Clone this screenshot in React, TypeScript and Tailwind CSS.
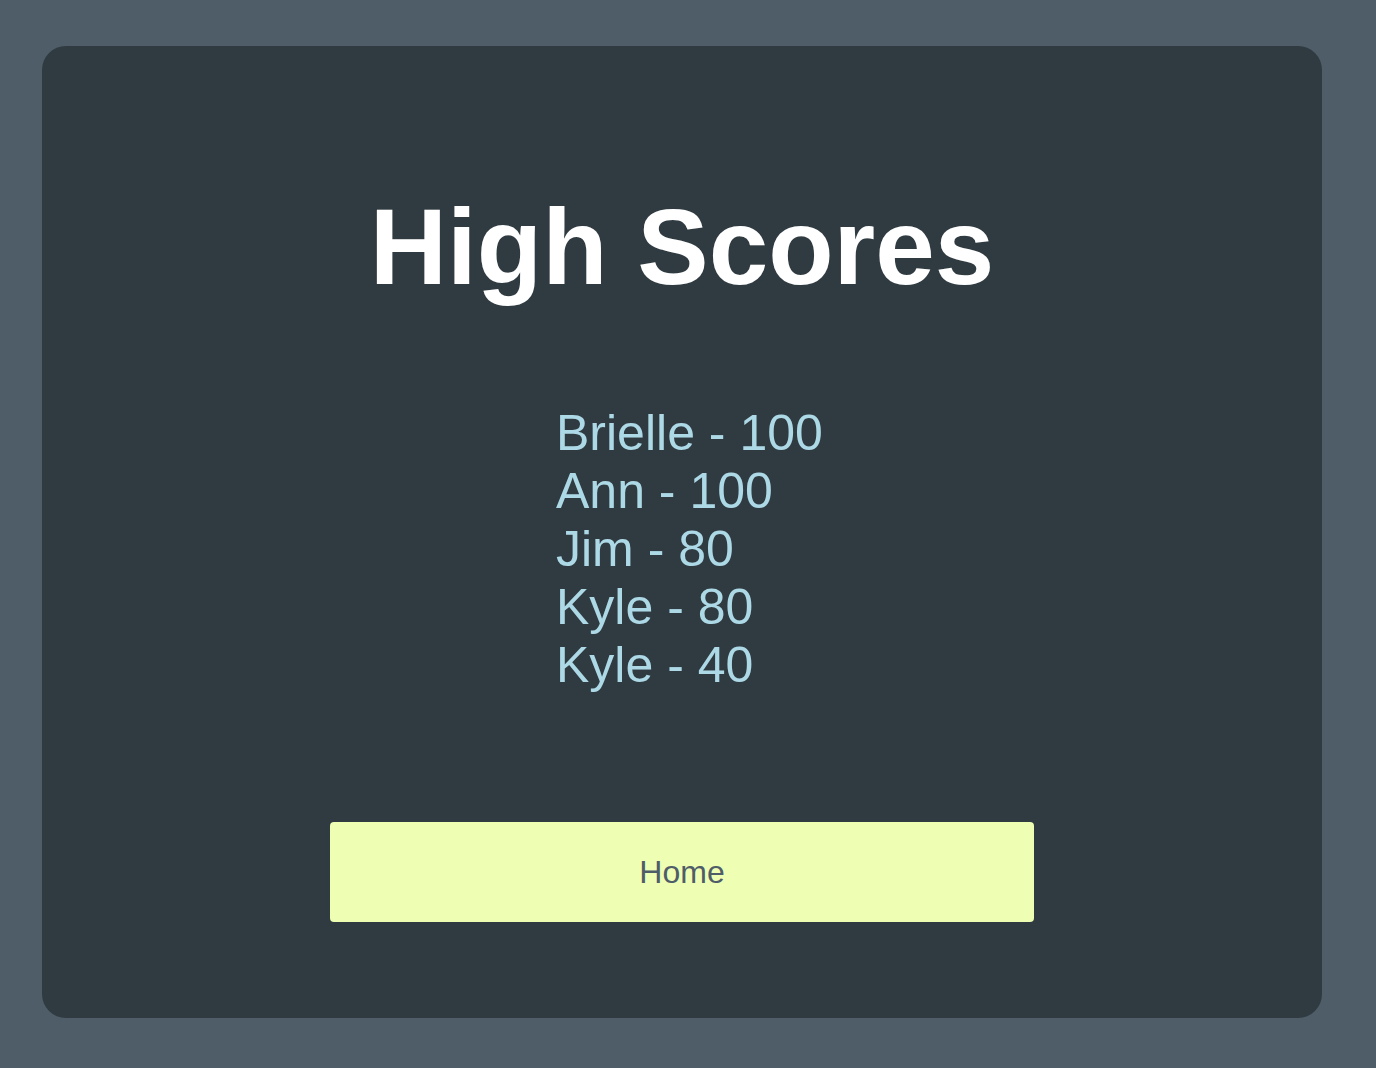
const scores = [
  { name: "Brielle", score: 100 },
  { name: "Ann", score: 100 },
  { name: "Jim", score: 80 },
  { name: "Kyle", score: 80 },
  { name: "Kyle", score: 40 },
];

export default function App() {
  return (
    <div
      className="w-full min-h-[1068px] bg-[#4f5d69] pt-[46px] pl-[42px]"
      style={{ fontFamily: '"Liberation Sans", Arial, Helvetica, sans-serif' }}
    >
      <div className="w-[1280px] h-[972px] rounded-[24px] bg-[#2f3b41] flex flex-col items-center pt-[146px]">
        <h1 className="text-[107px] leading-[110px] font-bold text-white">
          High Scores
        </h1>

        <ul className="mt-[102px] self-start pl-[514px] text-[50px] leading-[58px] text-[#add8e6]">
          {scores.map((s, idx) => (
            <li key={idx}>
              {s.name} - {s.score}
            </li>
          ))}
        </ul>

        <button className="mt-[128px] w-[704px] h-[100px] rounded-[4px] bg-[#eefeb3] text-[32px] text-[#4f5d69] cursor-pointer">
          Home
        </button>
      </div>
    </div>
  );
}
